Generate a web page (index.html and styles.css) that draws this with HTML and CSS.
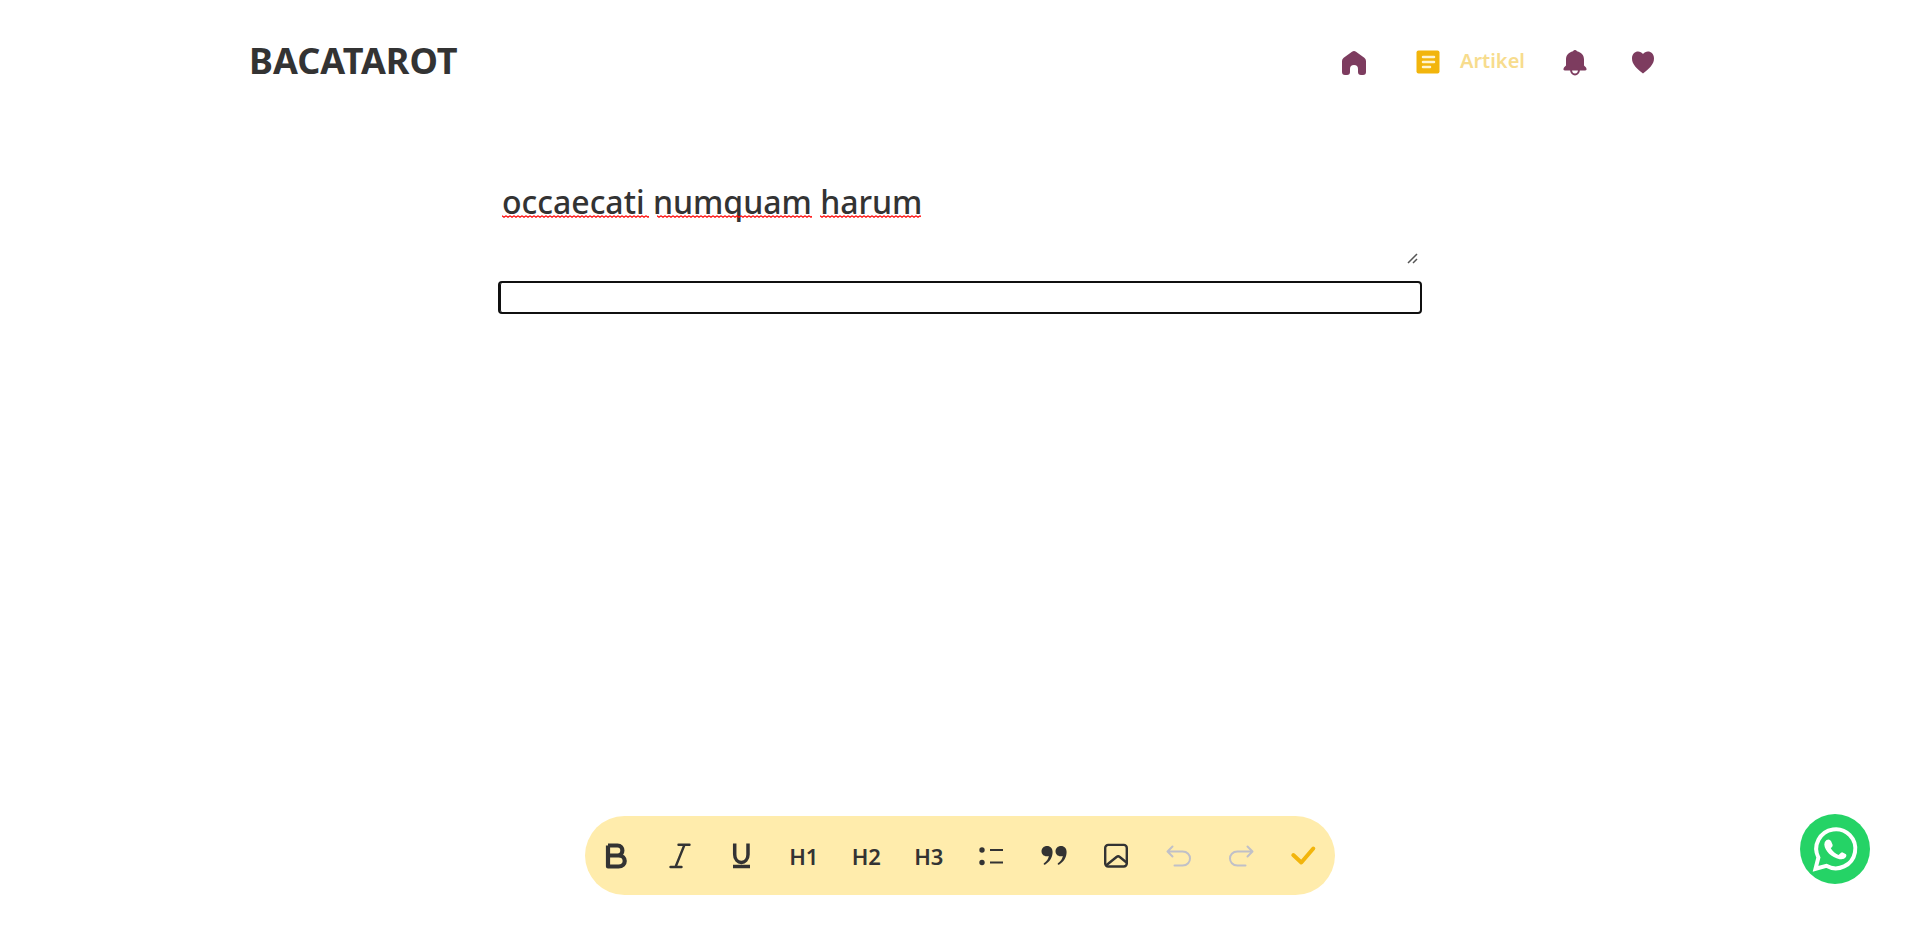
FILE: index.html
```html
<!DOCTYPE html>
<html lang="id">
<head>
<meta charset="utf-8">
<meta name="viewport" content="width=device-width, initial-scale=1">
<title>BACATAROT</title>
<link rel="stylesheet" href="styles.css">
</head>
<body>
<header class="header">
  <a class="brand" href="#">BACATAROT</a>
  <nav class="nav">
    <a class="nav-link" href="#" aria-label="Beranda"><svg class="icon" viewBox="0 0 24 24"><path d="M10 .8Q12-.7 14 .8L22.300 6.800Q24 8 24 10V21Q24 24 21 24H19Q16 24 16 21V18Q16 14 12 14T8 18V21Q8 24 5 24H3Q0 24 0 21V10Q0 8 1.700 6.800Z"/></svg></a>
    <a class="nav-link active" href="#"><svg class="icon" viewBox="0 0 24 24"><rect x=".5" y="-.5" width="23" height="23" rx="2"/><path class="lines" d="M7 6H18M7 11H18M7 16H14"/></svg><span>Artikel</span></a>
    <a class="nav-link" href="#" aria-label="Notifikasi"><svg class="icon" viewBox="0 0 24 24"><path d="M12-1Q13.300-1 14 .3C18.500 1.300 21 4.500 21 8.500V14.500L23 16.500Q24.500 19.500 22 19.500H2Q-.5 19.500 1 16.500L3 14.500V8.500C3 4.500 5.500 1.300 10 .3Q10.700-1 12-1Z"/><path class="clapper" d="M8 18.500C8 25 16 25 16 18.500"/></svg></a>
    <a class="nav-link" href="#" aria-label="Favorit"><svg class="icon" viewBox="0 0 24 24"><path d="M12 3C9-1.300 1-.3 1 7.500C1 13.500 6 17.500 12 22.500C18 17.500 23 13.500 23 7.500C23-.3 15-1.300 12 3Z"/></svg></a>
  </nav>
</header>
<main class="editor">
  <div class="title-field">
    <textarea class="title" aria-label="Judul" rows="2" spellcheck="false">occaecati numquam harum</textarea>
    <div class="spelling" aria-hidden="true"><i class="mark first"></i><i class="mark second"></i><i class="mark third"></i></div>
  </div>
  <div class="body-text" role="textbox" aria-label="Isi artikel" aria-multiline="true" contenteditable="true"></div>
</main>
<div class="toolbar" role="toolbar" aria-label="Format">
  <button class="tool" aria-label="Tebal"><svg class="icon" viewBox="0 0 24 24"><path class="bold" d="M4 1.500H13.500C20 1.500 20 11.500 13.500 11.500H4M13.500 11.500H14.500C22.800 11.500 22.800 22.500 14.500 22.500H4V1.500"/></svg></button>
  <button class="tool" aria-label="Miring"><svg class="icon" viewBox="0 0 24 24"><path class="stroke" d="M11.500 .8H22.500M3.500 23H14.500M17.500 .8L8.500 23"/></svg></button>
  <button class="tool" aria-label="Garis bawah"><svg class="icon" viewBox="0 0 24 24"><path class="under" d="M5.700-.5V10.500C5.700 21 19 21 19 10.500V-.5M4 22.500H21"/></svg></button>
  <button class="tool">H1</button>
  <button class="tool">H2</button>
  <button class="tool">H3</button>
  <button class="tool" aria-label="Daftar"><svg class="icon" viewBox="0 0 24 24"><circle cx="3" cy="6" r="2.700"/><circle cx="3" cy="18.500" r="2.700"/><path class="thin" d="M11 6H24M11 18.500H24"/></svg></button>
  <button class="tool" aria-label="Kutipan"><svg class="icon" viewBox="0 0 24 24"><path d="M5 2C8.500 2 10.600 4.500 10.600 8C10.600 13.500 7.500 18 3 20.700Q1.500 21 1.700 19.500C4.700 17 6.500 15 6.800 12C2.500 13.300-.5 10.500-.5 7.300C-.5 4.200 2 2 5 2Z"/><path d="M19 2C22.500 2 24.600 4.500 24.600 8C24.600 13.500 21.500 18 17 20.700Q15.500 21 15.700 19.500C18.700 17 20.500 15 20.800 12C16.500 13.300 13.500 10.500 13.500 7.300C13.500 4.200 16 2 19 2Z"/></svg></button>
  <button class="tool" aria-label="Gambar"><svg class="icon" viewBox="0 0 24 24"><rect class="frame" x="1.200" y=".9" width="21.600" height="21.600" rx="3"/><path class="frame" d="M2 21.500L12.500 13Q14.200 11.700 15.800 13L22.500 18.500"/></svg></button>
  <button class="tool" disabled aria-label="Urungkan"><svg class="icon" viewBox="0 0 24 24"><path class="thin round" d="M5.500 2.500L.5 7.500L5.500 12.500M1 7.500H15.500C25.500 7.500 25.500 21.500 15.500 21.500H7.500"/></svg></button>
  <button class="tool" disabled aria-label="Ulangi"><svg class="icon" viewBox="0 0 24 24"><path class="thin round" d="M18.500 2.500L23.500 7.500L18.500 12.500M23 7.500H8.500C-1.500 7.500-1.500 21.500 8.500 21.500H16.500"/></svg></button>
  <button class="tool save" aria-label="Simpan"><svg class="icon" viewBox="0 0 24 24"><path class="check" d="M1.300 11L9.300 18.500L21.300 4.500"/></svg></button>
</div>
<a class="whatsapp" href="#" aria-label="WhatsApp"><svg viewBox="0 0 70 70"><path class="bubble" d="M15.500 54.800L18.400 43.600A19.500 19.500 0 1 1 26.300 51.800Z"/><path class="phone" d="M26.500 26Q29.500 24.500 31 27L32.700 31Q33 32.500 30.800 34.300Q33.500 39 38.500 41L41 38.700Q42 38 43.200 38.700L46 40.200Q46.800 41 46 43Q44 46 39.500 45.200C31.500 43.500 24.800 37 24.300 30.500Q24.200 27.500 26.500 26Z"/></svg></a>
</body>
</html>
```

FILE: styles.css
```css
* { box-sizing: border-box; }
body {
  margin: 0;
  min-height: 100vh;
  display: flex;
  flex-direction: column;
  background: #fff;
  color: #333;
  font-family: "Noto Sans", sans-serif;
}
.header {
  display: flex;
  align-items: center;
  justify-content: space-between;
  height: 124px;
  padding: 0 265px 0 249px;
}
.brand {
  padding-bottom: 4px;
  color: #333;
  font-size: 36px;
  font-weight: 700;
  text-decoration: none;
}
.nav { display: flex; align-items: center; gap: 38px; padding-top: 2px; }
.nav-link {
  display: flex;
  align-items: center;
  gap: 20px;
  color: #7d3c5f;
  font-size: 20px;
  font-weight: 600;
  line-height: 24px;
  text-decoration: none;
}
.nav-link span { padding-bottom: 4px; }
.nav-link:first-child { margin-right: 12px; }
.nav-link:last-child { margin-left: 6px; }
.nav-link.active { height: 24px; color: #f7dc8d; }
.active .icon { fill: #f2b50c; }
.icon { display: block; width: 24px; height: 24px; fill: currentColor; overflow: visible; }
.icon path, .icon rect { stroke-linejoin: round; }
.lines { fill: none; stroke: #fff4cf; stroke-width: 2.5; stroke-linecap: round; }
.clapper { fill: none; stroke: currentColor; stroke-width: 2; }
.editor { flex: 1; width: 100%; max-width: 920px; margin: 0 auto; padding-top: 56px; }
.title-field { position: relative; }
.title {
  display: block;
  width: 100%;
  height: 86px;
  margin: 0;
  padding: 0 2px;
  border: 0;
  outline: 0;
  background: transparent;
  color: #333;
  font: 500 32px/44px "Noto Sans", sans-serif;
  resize: both;
}
.title::-webkit-resizer {
  background: url("data:image/svg+xml,%3Csvg xmlns='http://www.w3.org/2000/svg' width='15' height='15'%3E%3Cpath d='M3 12L12 3M8 12L12 8' fill='none' stroke='%23555' stroke-width='1.500'/%3E%3C/svg%3E") no-repeat right bottom;
}
.spelling { position: absolute; left: 2px; top: 35px; display: flex; gap: 8px; pointer-events: none; }
.mark {
  height: 3px;
  background: url("data:image/svg+xml,%3Csvg xmlns='http://www.w3.org/2000/svg' width='4' height='3'%3E%3Cpath d='M0 .8L2 2.200L4 .8' fill='none' stroke='red' stroke-width='1.200'/%3E%3C/svg%3E") repeat-x;
}
.first { width: 147px; }
.second { width: 155px; }
.third { width: 101px; }
.body-text {
  min-height: 29px;
  margin-top: 17px;
  border-left: 1px solid #111;
  border-radius: 2px;
  outline: 2px solid #101010;
}
.toolbar {
  display: flex;
  width: 750px;
  max-width: 100%;
  height: 79px;
  margin: 0 auto 39px;
  overflow: hidden;
  border-radius: 40px;
  background: #ffecac;
}
.tool {
  display: flex;
  flex: 1;
  align-items: center;
  justify-content: center;
  padding: 0;
  border: 0;
  background: none;
  color: #333;
  font: 600 22px/28px "Noto Sans", sans-serif;
}
.tool:disabled { color: #c0c0c8; }
.tool.save { color: #f2b50c; }
.bold, .stroke, .under, .thin, .frame, .check { fill: none; stroke: currentColor; }
.bold { stroke-width: 4.2; }
.stroke { stroke-width: 2.4; stroke-linecap: round; }
.under { stroke-width: 3.5; }
.thin { stroke-width: 2; }
.frame { stroke-width: 2.4; }
.check { stroke-width: 4; stroke-linecap: round; }
.round { stroke-linecap: round; }
.whatsapp {
  position: fixed;
  right: 50px;
  bottom: 50px;
  width: 70px;
  height: 70px;
  border-radius: 50%;
  background: #25d366;
}
.whatsapp svg { display: block; width: 100%; }
.bubble { fill: none; stroke: #fff; stroke-width: 4; stroke-linejoin: miter; }
.phone { fill: #fff; }
```
